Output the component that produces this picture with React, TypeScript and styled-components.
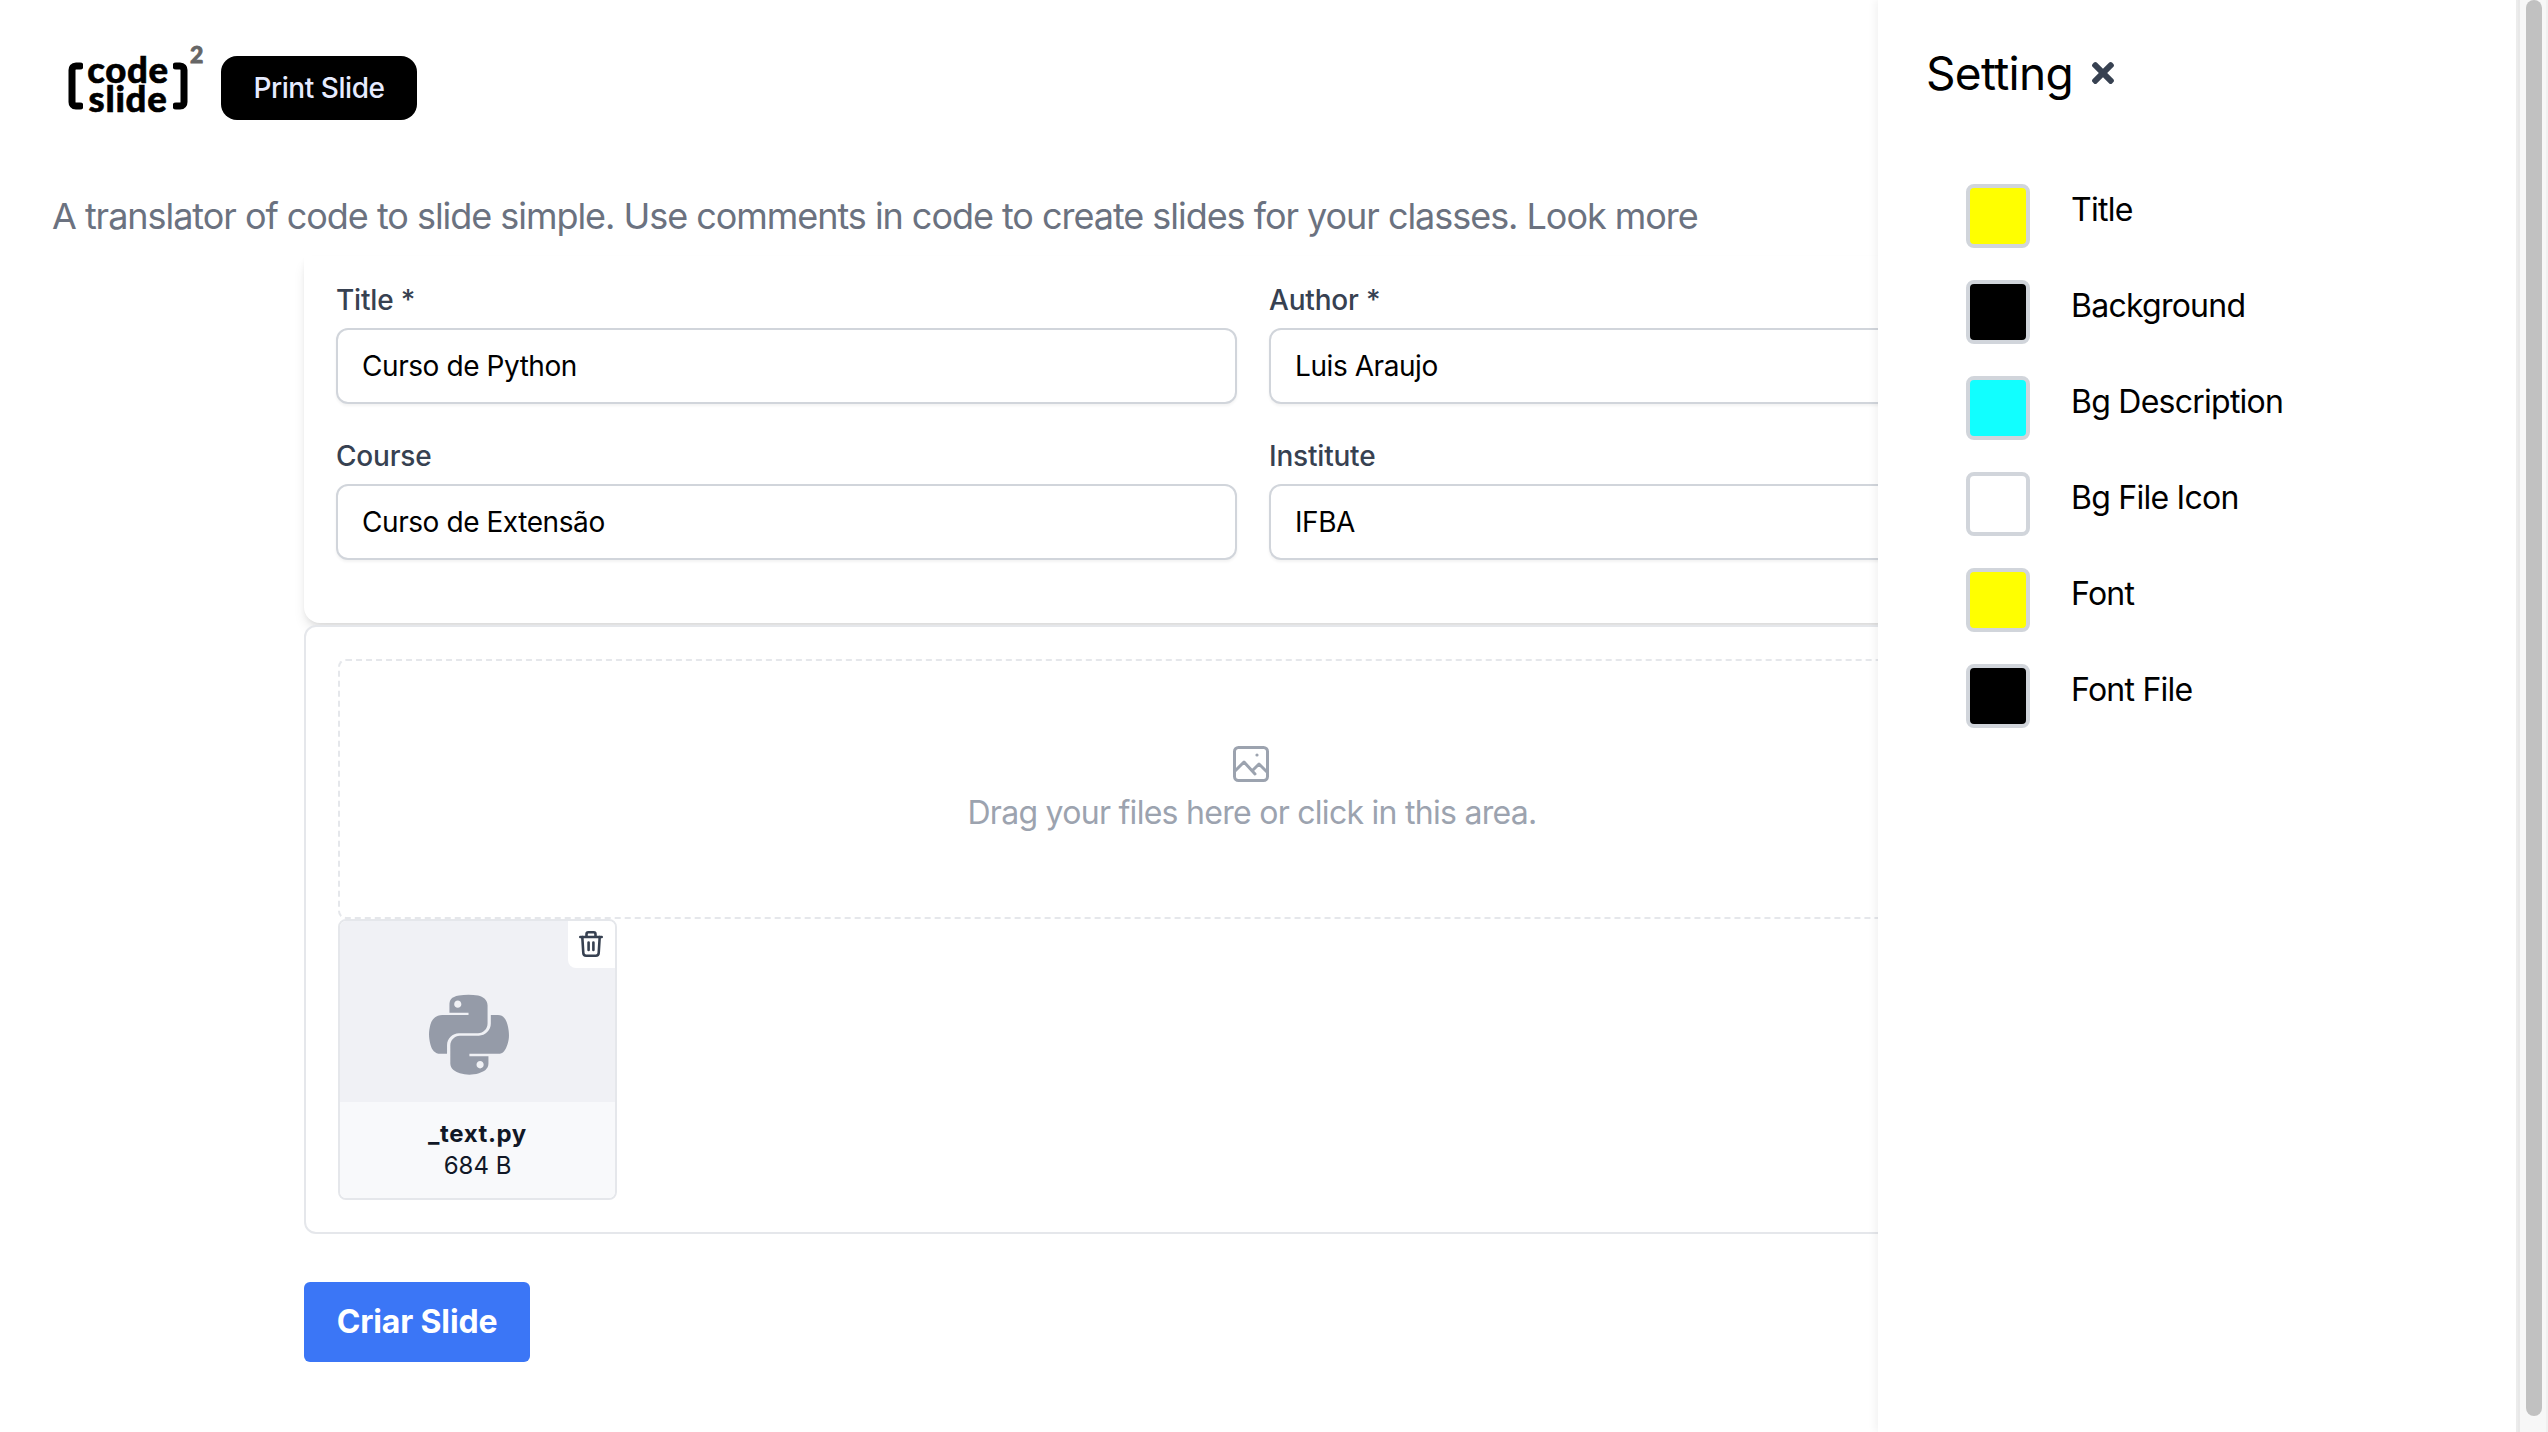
import React from "react";
import styled, { createGlobalStyle } from "styled-components";
import { FaPython, FaTimes } from "react-icons/fa";

const Global = createGlobalStyle`
  html, body { margin: 0; padding: 0; height: 100%; background: #fff; overflow: hidden; }
  * { box-sizing: border-box; }
  body { font-family: Inter, "Noto Sans", sans-serif; color: #000; }
`;

const Frame = styled.div`display: flex; width: 2548px; height: 1432px; overflow: hidden;`;
const Page = styled.main`position: relative; width: 2518px; height: 1432px; overflow: hidden;`;
const Header = styled.header`display: flex; align-items: center; height: 64px; margin: 56px 0 0 68px;`;
const Logo = styled.div`display: flex; align-items: flex-start; width: 134px; height: 64px; margin-right: 19px;`;
const Bracket = styled.svg`width: 15px; height: 48px; margin-top: 6px; flex: none;`;
const LogoWords = styled.div`
  display: flex; flex-direction: column; align-items: center; width: 90px; margin-top: -1px; flex: none;
  font-family: Lato, sans-serif; font-weight: 900; font-size: 36.5px; line-height: 29px; letter-spacing: 0.7px; color: #000;
  -webkit-text-stroke: 0.6px #000;
`;
const LogoPower = styled.span`
  font-family: Lato, sans-serif; font-weight: 900; font-size: 23px; line-height: 23px; color: #666; margin: -13px 0 0 2px;
  -webkit-text-stroke: 0.8px #666;
`;
const PrintButton = styled.button`
  width: 196px; height: 64px; border: 0; border-radius: 16px; background: #000; color: #e6ebff;
  font: 500 28px/40px Inter, sans-serif; letter-spacing: -0.45px; padding: 0;
`;
const Tagline = styled.p`
  margin: 72px 0 0 52px; font-size: 36px; line-height: 48px; color: #6b7280; white-space: nowrap; letter-spacing: -1.04px;
`;
const Content = styled.div`margin: 16px 0 0 304px; width: 1898px;`;
const FormCard = styled.section`
  height: 367px; padding: 24px 32px 0; border-radius: 0 0 16px 16px; background: #fff;
  box-shadow: 0 8px 14px -3px rgba(0,0,0,.12), 0 3px 6px -2px rgba(0,0,0,.08);
  display: grid; grid-template-columns: 901px 901px; column-gap: 32px; row-gap: 32px; align-content: start;
`;
const Field = styled.label`display: flex; flex-direction: column;`;
const FieldLabel = styled.span`font-size: 28px; line-height: 40px; font-weight: 500; color: #374151; margin-bottom: 8px; letter-spacing: -0.2px;`;
const TextInput = styled.input`
  height: 76px; padding: 0 24px; border: 2px solid #d1d5db; border-radius: 12px; background: #fff;
  font: 400 28px Inter, sans-serif; letter-spacing: -0.43px; color: #000; box-shadow: 0 2px 3px rgba(0,0,0,.05); outline: none;
`;
const UploadBox = styled.section`
  margin-top: 2px; height: 609px; padding: 32px; border: 2px solid #e5e7eb; border-radius: 12px; background: #fff;
`;
const DropArea = styled.div`
  height: 260px; border: 2px dashed #e5e7eb; border-radius: 8px; display: flex; flex-direction: column; align-items: center; padding: 85px 4px 0 0;
`;
const DropText = styled.span`font-size: 32px; line-height: 44px; color: #9ca3af; margin: 9px -2px 0 0; letter-spacing: -0.72px;`;
const FileCard = styled.article`
  position: relative; width: 279px; height: 281px; border: 2px solid #e5e7eb; border-radius: 8px; overflow: hidden; display: flex; flex-direction: column;
`;
const Preview = styled.div`
  height: 181px; background: #f0f1f5; display: flex; align-items: center; padding: 46px 0 0 89px; color: #959ba8;
`;
const DeleteCorner = styled.button`
  position: absolute; top: 0; right: 0; width: 47px; height: 47px; background: #fff; border: 0; border-radius: 0 0 0 8px;
  display: flex; align-items: center; justify-content: center; padding: 0 2px 2px 0;
`;
const FileFooter = styled.div`
  flex: 1; background: #f8f9fb; display: flex; flex-direction: column; align-items: center; padding-top: 16px; color: #111827;
`;
const FileName = styled.span`font-size: 24px; line-height: 32px; font-weight: 700; letter-spacing: 0.6px;`;
const FileSize = styled.span`font-size: 24px; line-height: 32px; font-weight: 400;`;
const SubmitButton = styled.button`
  display: block; margin-top: 48px; width: 226px; height: 80px; border: 0; border-radius: 6px; background: #3b76f6; color: #fff;
  font: 700 32px/40px Inter, sans-serif; letter-spacing: -0.15px; padding: 0;
`;
const Drawer = styled.aside`
  position: absolute; top: 0; right: 0; bottom: 0; width: 640px; background: #fff; box-shadow: -3px 0 8px rgba(0,0,0,.05);
  padding: 43px 0 0 48px; border-right: 2px solid #ececec;
`;
const DrawerHead = styled.div`display: flex; align-items: center; gap: 14px; height: 60px; margin-bottom: 81px; color: #374151;`;
const DrawerTitle = styled.h2`margin: 0; font-size: 46px; line-height: 60px; font-weight: 400; color: #000; letter-spacing: -0.7px;`;
const ColorRow = styled.div`display: flex; align-items: flex-start; gap: 41px; height: 96px; padding-left: 40px;`;
const Swatch = styled.span<{ $c: string }>`
  display: block; width: 64px; height: 64px; border: 4px solid #d1d5db; border-radius: 8px; background: ${p => p.$c}; flex: none;
`;
const ColorName = styled.span`font-size: 32px; line-height: 48px; color: #000; margin-top: 2px; letter-spacing: -0.75px;`;
const ScrollTrack = styled.div`
  width: 30px; height: 1432px; background: #f7f7f7; border-left: 2px solid #e8e8e8; border-right: 2px solid #f0f0f0; padding: 0 4px 0 6px; flex: none;
`;
const ScrollThumb = styled.div`height: 1416px; background: #c1c1c1; border-radius: 8px;`;

const colors: [string, string][] = [
  ["Title", "#ffff00"], ["Background", "#000000"], ["Bg Description", "#11ffff"],
  ["Bg File Icon", "#ffffff"], ["Font", "#ffff00"], ["Font File", "#000000"],
];

const ImageIcon = () => (
  <svg width="36" height="36" viewBox="0 0 36 36" fill="none" stroke="#9ca3af" strokeWidth="3" strokeLinejoin="round" strokeLinecap="round">
    <rect x="1.5" y="1.5" width="33" height="33" rx="4" />
    <path d="M2 25l9-9 11 12M20 24l6-6 8 8" />
    <circle cx="24" cy="9" r="1.6" fill="#9ca3af" stroke="none" />
  </svg>
);

const TrashIcon = () => (
  <svg width="24" height="26" viewBox="0 0 24 26" fill="none" stroke="#374151" strokeWidth="2.6" strokeLinecap="round" strokeLinejoin="round">
    <path d="M1.3 6h21.4M7.5 6V3.2c0-1 .7-1.9 1.8-1.9h5.4c1.1 0 1.8.9 1.8 1.9V6" />
    <path d="M3.3 6l1 16c.1 1.5 1.2 2.7 2.8 2.7h9.8c1.6 0 2.7-1.2 2.8-2.7l1-16" />
    <path d="M9.6 11.5v7.5M14.4 11.5v7.5" />
  </svg>
);

export default function App() {
  return (
    <Frame>
      <Global />
      <Page>
        <Header>
          <Logo>
            <Bracket viewBox="0 0 15 48" fill="none" stroke="#000" strokeWidth="7" strokeLinecap="round"><path d="M12 4H8C5 4 4 6 4 8v32c0 2 1 4 4 4h4" /></Bracket>
            <LogoWords><span>code</span><span>slide</span></LogoWords>
            <Bracket viewBox="0 0 15 48" fill="none" stroke="#000" strokeWidth="7" strokeLinecap="round"><path d="M3 4h4c3 0 4 2 4 4v32c0 2-1 4-4 4H3" /></Bracket>
            <LogoPower>2</LogoPower>
          </Logo>
          <PrintButton>Print Slide</PrintButton>
        </Header>
        <Tagline>A translator of code to slide simple. Use comments in code to create slides for your classes. Look more</Tagline>
        <Content>
          <FormCard>
            <Field><FieldLabel>Title *</FieldLabel><TextInput readOnly value="Curso de Python" /></Field>
            <Field><FieldLabel>Author *</FieldLabel><TextInput readOnly value="Luis Araujo" /></Field>
            <Field><FieldLabel>Course</FieldLabel><TextInput readOnly value="Curso de Extensão" /></Field>
            <Field><FieldLabel>Institute</FieldLabel><TextInput readOnly value="IFBA" /></Field>
          </FormCard>
          <UploadBox>
            <DropArea>
              <ImageIcon />
              <DropText>Drag your files here or click in this area.</DropText>
            </DropArea>
            <FileCard>
              <Preview><FaPython style={{ width: 80, height: 91.4 }} /></Preview>
              <DeleteCorner aria-label="Delete"><TrashIcon /></DeleteCorner>
              <FileFooter>
                <FileName>_text.py</FileName>
                <FileSize>684 B</FileSize>
              </FileFooter>
            </FileCard>
          </UploadBox>
          <SubmitButton>Criar Slide</SubmitButton>
        </Content>
        <Drawer>
          <DrawerHead>
            <DrawerTitle>Setting</DrawerTitle>
            <FaTimes size={32} />
          </DrawerHead>
          {colors.map(([name, c]) => (
            <ColorRow key={name}>
              <Swatch $c={c} />
              <ColorName>{name}</ColorName>
            </ColorRow>
          ))}
        </Drawer>
      </Page>
      <ScrollTrack><ScrollThumb /></ScrollTrack>
    </Frame>
  );
}
